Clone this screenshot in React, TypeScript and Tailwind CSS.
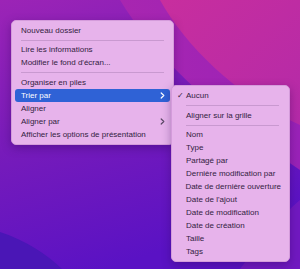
import React from 'react'

type Item =
  | { kind: 'item'; label: string; active?: boolean; submenu?: boolean; checked?: boolean }
  | { kind: 'sep'; h: string }

const mainItems: Item[] = [
  { kind: 'item', label: 'Nouveau dossier' },
  { kind: 'sep', h: 'h-[6px]' },
  { kind: 'item', label: 'Lire les informations' },
  { kind: 'item', label: "Modifier le fond d'écran..." },
  { kind: 'sep', h: 'h-[7px]' },
  { kind: 'item', label: 'Organiser en piles' },
  { kind: 'item', label: 'Trier par', active: true, submenu: true },
  { kind: 'item', label: 'Aligner' },
  { kind: 'item', label: 'Aligner par', submenu: true },
  { kind: 'item', label: 'Afficher les options de présentation' }
]

const sortItems: Item[] = [
  { kind: 'item', label: 'Aucun', checked: true },
  { kind: 'sep', h: 'h-[7px]' },
  { kind: 'item', label: 'Aligner sur la grille' },
  { kind: 'sep', h: 'h-[6px]' },
  { kind: 'item', label: 'Nom' },
  { kind: 'item', label: 'Type' },
  { kind: 'item', label: 'Partagé par' },
  { kind: 'item', label: 'Dernière modification par' },
  { kind: 'item', label: 'Date de dernière ouverture' },
  { kind: 'item', label: "Date de l'ajout" },
  { kind: 'item', label: 'Date de modification' },
  { kind: 'item', label: 'Date de création' },
  { kind: 'item', label: 'Taille' },
  { kind: 'item', label: 'Tags' }
]

function Chevron({ color }: { color: string }) {
  return (
    <svg width="5" height="7" viewBox="0 0 5 7" className="shrink-0">
      <polyline points="1.2,1 3.8,3.5 1.2,6" fill="none" stroke={color} strokeWidth="1.2" strokeLinecap="round" strokeLinejoin="round" />
    </svg>
  )
}

function Wallpaper() {
  return (
    <svg className="absolute inset-0" width="300" height="269" viewBox="0 0 300 269" preserveAspectRatio="none">
      <defs>
        <linearGradient id="base" x1="0" y1="0" x2="0.35" y2="1">
          <stop offset="0" stopColor="#9c24b6" />
          <stop offset="0.45" stopColor="#7a1cb9" />
          <stop offset="1" stopColor="#5a12c4" />
        </linearGradient>
        <linearGradient id="pink" x1="0" y1="0" x2="1" y2="1">
          <stop offset="0" stopColor="#c82e9e" />
          <stop offset="1" stopColor="#b42aa8" />
        </linearGradient>
        <linearGradient id="band" x1="0" y1="0" x2="1" y2="0">
          <stop offset="0" stopColor="#a826b0" />
          <stop offset="1" stopColor="#9a22b8" />
        </linearGradient>
      </defs>
      <rect width="300" height="269" fill="url(#base)" />
      <path d="M120,0 C150,50 210,110 300,170 L300,0 Z" fill="url(#band)" />
      <path d="M160,0 C185,45 235,95 300,125 L300,0 Z" fill="url(#pink)" />
      <path d="M240,269 C262,240 282,215 300,200 L300,269 Z" fill="#7a1cc0" opacity="0.7" />
      <path d="M0,232 C25,240 48,255 62,269 L0,269 Z" fill="#4a16b6" />
    </svg>
  )
}

function Menu({ items, width, checkCol }: { items: Item[]; width: string; checkCol?: boolean }) {
  return (
    <div
      className={`${width} rounded-[5px] bg-[#e7b3eb] border border-[#d49bdb] shadow-[0_3px_10px_rgba(40,0,80,0.35)] px-[3px] pt-[3px] pb-[3px]`}
    >
      {items.map((it, i) =>
        it.kind === 'sep' ? (
          <div key={i} className={`${it.h} flex items-center ${checkCol ? 'pl-[11px] pr-[7px]' : 'px-[6px]'}`}>
            <div className="h-px w-full bg-[#c999d0]" />
          </div>
        ) : (
          <div
            key={i}
            className={`h-[13px] flex items-center rounded-[3px] ${checkCol ? 'pl-[2px]' : 'pl-[6px]'} pr-[5px] ${
              it.active ? 'bg-[#2f62d6] text-white' : 'text-[#33223f]'
            }`}
          >
            {checkCol && (
              <span className="w-[9px] text-[8px] leading-none font-bold font-['DejaVu_Sans',sans-serif] text-[#33223f]">
                {it.checked ? '✓' : ''}
              </span>
            )}
            <span className="flex-1 whitespace-nowrap text-[8px] leading-[13px] font-['Liberation_Sans',Arial,sans-serif]">
              {it.label}
            </span>
            {it.submenu && <Chevron color={it.active ? '#ffffff' : '#5a4866'} />}
          </div>
        )
      )}
    </div>
  )
}

export default function App() {
  return (
    <div className="relative w-[300px] h-[269px] overflow-hidden">
      <Wallpaper />
      <div className="relative flex items-start pt-[20px] pl-[11px]">
        <Menu items={mainItems} width="w-[163px]" />
        <div className="-ml-[3px] mt-[65px]">
          <Menu items={sortItems} width="w-[119px]" checkCol />
        </div>
      </div>
    </div>
  )
}
